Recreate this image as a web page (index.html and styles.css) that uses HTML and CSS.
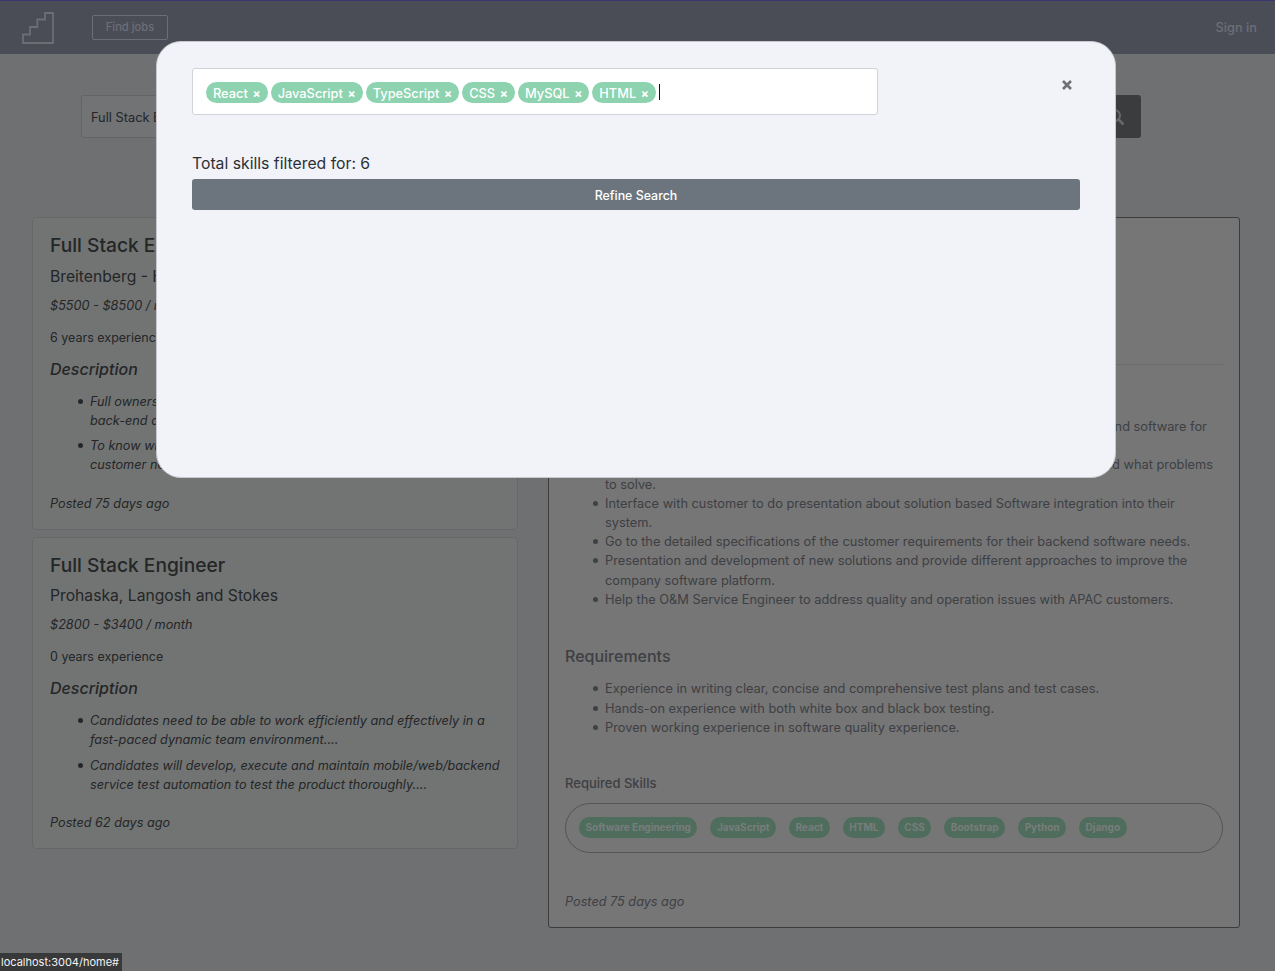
FILE: index.html
```html
<!DOCTYPE html>
<html lang="en">
<head>
<meta charset="utf-8">
<title>Jobs</title>
<link rel="stylesheet" href="styles.css">
</head>
<body>
<header class="nav">
  <svg class="logo" width="32" height="32" viewBox="0 0 32 32" aria-hidden="true"><path d="M1 31V22.500H8V15H15.300V7.500H23V1H31V31Z" fill="none" stroke="currentColor" stroke-width="1.800"/></svg>
  <a class="find" href="#">Find jobs</a>
  <a class="signin" href="#">Sign in</a>
</header>
<main class="page">
  <form class="search">
    <div class="search-input">Full Stack Engineer</div>
    <button class="search-btn" type="button" aria-label="Search"><svg width="18" height="18" viewBox="0 0 18 18" aria-hidden="true"><circle cx="7.500" cy="7.500" r="5.500" fill="none" stroke="currentColor" stroke-width="2"/><path d="M11.500 11.500L16.500 16.500" stroke="currentColor" stroke-width="2.500"/></svg></button>
  </form>
  <div class="results">
    <section class="list">
      <article class="card">
        <h2>Full Stack Engineer</h2>
        <p class="company">Breitenberg - Hettinger</p>
        <p class="salary">$5500 - $8500 / month</p>
        <p class="exp">6 years experience</p>
        <h3>Description</h3>
        <ul>
          <li>Full ownership of the development of the front-end, including the back-end and the ongoing product support....</li>
          <li>To know what solutions the company offers and understand what customer needs are being solved....</li>
        </ul>
        <p class="posted">Posted 75 days ago</p>
      </article>
      <article class="card">
        <h2>Full Stack Engineer</h2>
        <p class="company">Prohaska, Langosh and Stokes</p>
        <p class="salary">$2800 - $3400 / month</p>
        <p class="exp">0 years experience</p>
        <h3>Description</h3>
        <ul>
          <li>Candidates need to be able to work efficiently and effectively in a fast-paced dynamic team environment....</li>
          <li>Candidates will develop, execute and maintain mobile/web/backend service test automation to test the product thoroughly....</li>
        </ul>
        <p class="posted">Posted 62 days ago</p>
      </article>
    </section>
    <section class="detail">
      <div class="detail-head"></div>
      <h4 class="resp">Responsibilities</h4>
      <ul class="detail-list">
        <li>Work with the team to design and also develop the solutions, architecture and backend software for our customers across the whole of the Asia Pacific region, from start to finish.</li>
        <li>Understand the customer's business needs, what they are looking for right today and what problems<br>to solve.</li>
        <li>Interface with customer to do presentation about solution based Software integration into their system.</li>
        <li>Go to the detailed specifications of the customer requirements for their backend software needs.</li>
        <li>Presentation and development of new solutions and provide different approaches to improve the company software platform.</li>
        <li>Help the O&amp;M Service Engineer to address quality and operation issues with APAC customers.</li>
      </ul>
      <h4 class="req">Requirements</h4>
      <ul class="detail-list">
        <li>Experience in writing clear, concise and comprehensive test plans and test cases.</li>
        <li>Hands-on experience with both white box and black box testing.</li>
        <li>Proven working experience in software quality experience.</li>
      </ul>
      <h5>Required Skills</h5>
      <div class="skills">
        <span class="skill">Software Engineering</span>
        <span class="skill">JavaScript</span>
        <span class="skill">React</span>
        <span class="skill">HTML</span>
        <span class="skill">CSS</span>
        <span class="skill">Bootstrap</span>
        <span class="skill">Python</span>
        <span class="skill">Django</span>
      </div>
      <p class="detail-posted">Posted 75 days ago</p>
    </section>
  </div>
</main>
<div class="backdrop">
  <div class="modal">
    <div class="modal-top">
      <div class="chips">
        <span class="chip">React <b>×</b></span>
        <span class="chip">JavaScript <b>×</b></span>
        <span class="chip">TypeScript <b>×</b></span>
        <span class="chip">CSS <b>×</b></span>
        <span class="chip">MySQL <b>×</b></span>
        <span class="chip">HTML <b>×</b></span>
        <span class="caret"></span>
      </div>
      <svg class="close" width="10" height="10" viewBox="0 0 10 10" aria-label="Close"><path d="M1 1L9 9M9 1L1 9" stroke="currentColor" stroke-width="2.600"/></svg>
    </div>
    <p class="total">Total skills filtered for: 6</p>
    <button class="refine" type="button">Refine Search</button>
  </div>
</div>
<div class="status">localhost:3004/home#</div>
</body>
</html>
```
FILE: styles.css
```css
* { box-sizing: border-box; }
html, body { margin: 0; height: 971px; overflow: hidden; }
body {
  background: #dce0e4;
  font-family: Inter, "Liberation Sans", sans-serif;
  font-size: 12.800px;
  line-height: 19.200px;
  color: #484c50;
}
h2, h3, h4, h5, p, ul { margin: 0; }
ul { list-style: none; }
li { position: relative; }
li::before {
  content: "";
  position: absolute;
  left: -12px;
  top: 7px;
  width: 5px;
  height: 5px;
  border-radius: 50%;
  background: currentColor;
}

.nav {
  height: 54px;
  border-top: 1px solid #766ae0;
  background: #9498ac;
  display: flex;
  align-items: center;
  padding: 0 18px 0 22px;
  color: #d8dcec;
}
.logo { flex: none; }
.find {
  margin-left: 38px;
  width: 76px;
  height: 25px;
  border: 1px solid #d8dcec;
  border-radius: 2px;
  color: inherit;
  text-decoration: none;
  font-size: 11.200px;
  font-weight: 500;
  line-height: 23px;
  text-align: center;
}
.signin {
  margin-left: auto;
  color: inherit;
  text-decoration: none;
  font-size: 12.800px;
  font-weight: 500;
}

.page { padding: 41px 35px 0 32px; }
.search {
  display: flex;
  height: 43px;
  margin: 0 99px 0 49px;
}
.search-input {
  flex: 1;
  border: 1px solid #c4c8cc;
  border-radius: 3px 0 0 3px;
  background: #e2e6ea;
  padding-left: 9px;
  line-height: 43px;
  font-size: 12.800px;
}
.search-btn {
  width: 50px;
  border: 0;
  border-radius: 0 3px 3px 0;
  background: #74787c;
  color: #d0d2d4;
  padding: 3px 0 0;
}

.results {
  display: flex;
  gap: 30px;
  align-items: flex-start;
  margin-top: 79px;
}
.list { width: 486px; display: flex; flex-direction: column; gap: 7px; }
.card {
  background: #e4e8e6;
  border: 1px solid #ccd0d0;
  border-radius: 4px;
  padding: 15px 17px 17px;
  height: 312.500px;
}
.card h2 {
  font-size: 19.200px;
  font-weight: 500;
  line-height: 24px;
}
.company { font-size: 15.700px; line-height: 24px; margin-top: 7.600px; }
.salary { font-style: italic; font-size: 12.700px; margin-top: 7.200px; }
.exp { font-size: 12.500px; margin-top: 12.800px; }
.card h3 {
  font-size: 16px;
  font-style: italic;
  font-weight: 500;
  line-height: 24px;
  margin-top: 9.800px;
}
.card ul { margin-top: 11px; padding-left: 40px; font-style: italic; font-size: 12.700px; }
.card li::before { left: -12.500px; }
.card li + li { margin-top: 6px; }
.posted { font-style: italic; font-size: 12.700px; margin-top: 19px; }

.detail {
  width: 692px;
  height: 711px;
  background: #ececec;
  border: 1px solid #74787c;
  border-radius: 3px;
  padding: 0 16px;
  color: #7c8088;
}
.detail-head { height: 147px; border-bottom: 1px solid #d8d8d8; }
.resp { font-size: 16px; font-weight: 500; line-height: 24px; margin-top: 12px; }
.detail-list { padding-left: 40px; }
.resp + .detail-list { margin-top: 16px; }
.req { font-size: 16px; font-weight: 500; line-height: 24px; margin-top: 35px; }
.req + .detail-list { margin-top: 11.400px; }
.detail h5 { font-size: 13px; font-weight: 500; line-height: 20px; margin-top: 36px; }
.skills {
  display: flex;
  align-items: center;
  gap: 13px;
  height: 50px;
  margin-top: 9.600px;
  padding: 0 13px;
  border: 1px solid #a8a8a8;
  border-radius: 25px;
}
.skill {
  height: 21px;
  padding: 0 6.500px;
  background: #9cdabb;
  border-radius: 11px;
  color: #f0f8f4;
  font-size: 10px;
  font-weight: 700;
  line-height: 21px;
  white-space: nowrap;
}
.detail-posted { font-style: italic; font-size: 12.700px; margin-top: 39px; }

.backdrop {
  position: fixed;
  inset: 0;
  background: rgba(0, 0, 0, .5);
  padding: 41px 0 0 156px;
}
.modal {
  width: 960px;
  height: 437px;
  background: #f1f3f9;
  border: 1px solid #c6c8ce;
  border-radius: 25px;
  padding: 26px 35px;
  color: #2c3036;
}
.modal-top { display: flex; align-items: flex-start; }
.chips {
  width: 686px;
  height: 47px;
  flex: none;
  background: #fff;
  border: 1px solid #ced4da;
  border-radius: 3px;
  padding: 13px 0 0 13px;
  display: flex;
  align-items: flex-start;
  gap: 3px;
}
.chip {
  height: 21px;
  padding: 1px 7px 0;
  background: #8dd3b0;
  border-radius: 11px;
  color: #fff;
  font-size: 12.800px;
  font-weight: 500;
  line-height: 22px;
  white-space: nowrap;
}
.chip b { font-weight: 700; font-size: 12px; margin-left: 1.300px; }
.caret { width: 1px; height: 16px; margin: 2px 0 0 0; background: #111; }
.close { margin: 12px 0 0 184px; color: #6f7175; flex: none; }
.total { margin-top: 37px; font-size: 15.750px; line-height: 24px; }
.refine {
  display: block;
  width: 888px;
  height: 31px;
  margin-top: 3px;
  border: 0;
  border-radius: 3px;
  background: #6c757d;
  color: #fff;
  font: 500 12.400px/31px Inter, "Liberation Sans", sans-serif;
}

.status {
  position: fixed;
  left: 0;
  bottom: 0;
  width: 122px;
  height: 18px;
  padding-left: 1px;
  background: #38393b;
  color: #f2f2f2;
  font-size: 11px;
  line-height: 18px;
  white-space: nowrap;
}
```
